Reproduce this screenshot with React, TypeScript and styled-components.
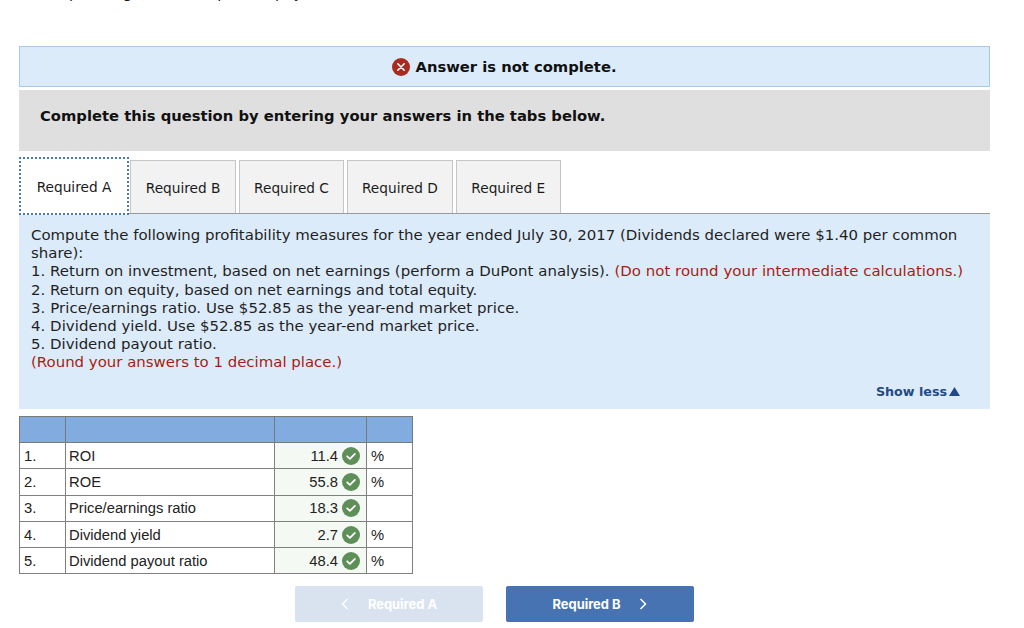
import React from "react";
import styled, { createGlobalStyle } from "styled-components";

const GlobalStyle = createGlobalStyle`
  html, body {
    margin: 0;
    padding: 0;
    height: 628px;
    overflow: hidden;
    background: #fff;
    font-family: "DejaVu Sans", Verdana, sans-serif;
    color: #1a1a1a;
  }
`;

const Page = styled.div`
  display: flex;
  flex-direction: column;
  width: 971px;
  margin-left: 19px;
`;

const ClippedLine = styled.div`
  height: 46px;
  margin-left: 1px;
  overflow: hidden;
  font-size: 15px;
  line-height: 18px;
  white-space: nowrap;
  & > span {
    display: block;
    margin-top: -16px;
  }
`;

const Banner = styled.div`
  box-sizing: border-box;
  height: 41px;
  display: flex;
  align-items: center;
  justify-content: center;
  gap: 5px;
  background: #dcebf9;
  border: 1px solid #a9c8e6;
  font-size: 14.75px;
  font-weight: 700;
  color: #111;
`;

const Instruction = styled.div`
  box-sizing: border-box;
  height: 61px;
  margin-top: 3px;
  padding: 16px 21px 0;
  background: #dfdfdf;
  font-size: 14.75px;
  line-height: 19px;
  font-weight: 700;
  color: #111;
`;

const TabBar = styled.div`
  display: flex;
  align-items: flex-end;
  gap: 3px;
  height: 53px;
  margin-top: 9px;
  border-bottom: 1px solid #9a9a9a;
`;

const Tab = styled.div<{ $active?: boolean }>`
  box-sizing: border-box;
  position: relative;
  width: ${(p) => (p.$active ? "110px" : "105.4px")};
  height: ${(p) => (p.$active ? "58px" : "53px")};
  margin-right: ${(p) => (p.$active ? "-1.6px" : "0")};
  margin-bottom: ${(p) => (p.$active ? "-2px" : "0")};
  display: flex;
  align-items: center;
  justify-content: center;
  padding-top: 2px;
  padding-bottom: ${(p) => (p.$active ? "1px" : "0")};
  font-size: 13.7px;
  color: #1a1a1a;
  background: ${(p) => (p.$active ? "#fff" : "#f2f2f2")};
  border: ${(p) => (p.$active ? "2px dotted #4a78b8" : "1px solid #c6c6c6")};
  border-bottom: ${(p) => (p.$active ? "2px dotted #4a78b8" : "none")};
  z-index: ${(p) => (p.$active ? 1 : 0)};
`;

const QuestionPanel = styled.div`
  box-sizing: border-box;
  height: 195px;
  padding: 12px 12px 0;
  background: #dcebf9;
  font-size: 14.95px;
  line-height: 18.2px;
  color: #1f1f1f;
  display: flex;
  flex-direction: column;
`;

const Line = styled.div<{ $track?: number }>`
  letter-spacing: ${(p) => p.$track ?? 0}px;
`;

const Red = styled.span`
  color: #a81c12;
`;

const ShowLess = styled.div`
  display: flex;
  align-items: center;
  justify-content: flex-end;
  gap: 2px;
  margin-top: 11px;
  padding-right: 18px;
  font-size: 12.7px;
  font-weight: 700;
  color: #1f4a87;
`;

const Table = styled.table`
  width: 393px;
  margin-top: 7px;
  border-collapse: collapse;
  table-layout: fixed;
  font-family: "Liberation Sans", Arial, sans-serif;
  font-size: 14.75px;
  color: #222;
`;

const HeadCell = styled.th`
  height: 25px;
  padding: 0;
  background: #82abe0;
  border: 1px solid #77797c;
`;

const Cell = styled.td`
  height: 25.3px;
  padding: 0 0 0 3px;
  border: 1px solid #808080;
`;

const IndexCell = styled(Cell)`
  padding-left: 4px;
`;

const UnitCell = styled(Cell)`
  padding-left: 4px;
`;

const AnswerCell = styled(Cell)`
  padding: 0;
  background: #f5f9f3;
`;

const AnswerInner = styled.div`
  display: flex;
  align-items: center;
  justify-content: flex-end;
  gap: 4px;
  padding-right: 6px;
`;

const Footer = styled.div`
  display: flex;
  gap: 23px;
  margin-top: 12px;
  margin-left: 276px;
`;

const NavButton = styled.div<{ $disabled?: boolean }>`
  box-sizing: border-box;
  width: 188px;
  height: 36px;
  display: flex;
  align-items: center;
  justify-content: center;
  gap: 19px;
  border-radius: 2px;
  background: ${(p) => (p.$disabled ? "#d9e3f0" : "#4773b3")};
  color: #fff;
  font-family: Inter, "Liberation Sans", sans-serif;
  font-size: 12.9px;
  font-weight: 700;
`;

const ErrorIcon = () => (
  <svg width="18" height="18" viewBox="0 0 18 18">
    <circle cx="9" cy="9" r="9" fill="#a82a20" />
    <path d="M5.8 5.8l6.4 6.4M12.2 5.8l-6.4 6.4" stroke="#fff" strokeWidth="1.6" strokeLinecap="round" />
  </svg>
);

const CheckIcon = () => (
  <svg width="18" height="18" viewBox="0 0 18 18">
    <circle cx="9" cy="9" r="9" fill="#5f8f58" />
    <path d="M5.2 9.3l2.7 2.6 5-5" fill="none" stroke="#fff" strokeWidth="1.8" strokeLinecap="round" strokeLinejoin="round" />
  </svg>
);

const Chevron = ({ left }: { left?: boolean }) => (
  <svg width="8" height="12" viewBox="0 0 8 12">
    <path d={left ? "M6.5 1L1.5 6l5 5" : "M1.5 1l5 5-5 5"} fill="none" stroke="#fff" strokeWidth="1.5" />
  </svg>
);

const rows = [
  { name: "ROI", value: "11.4", unit: "%" },
  { name: "ROE", value: "55.8", unit: "%" },
  { name: "Price/earnings ratio", value: "18.3", unit: "" },
  { name: "Dividend yield", value: "2.7", unit: "%" },
  { name: "Dividend payout ratio", value: "48.4", unit: "%" },
];

const tabs = ["Required A", "Required B", "Required C", "Required D", "Required E"];

export default function App() {
  return (
    <Page>
      <GlobalStyle />
      <ClippedLine>
        <span>Total operating and net expenses pay</span>
      </ClippedLine>
      <Banner>
        <ErrorIcon />
        Answer is not complete.
      </Banner>
      <Instruction>Complete this question by entering your answers in the tabs below.</Instruction>
      <TabBar>
        {tabs.map((t, i) => (
          <Tab key={t} $active={i === 0}>
            {t}
          </Tab>
        ))}
      </TabBar>
      <QuestionPanel>
        <Line>
          Compute the following profitability measures for the year ended July 30, 2017 (Dividends declared were $1.40 per common share):
        </Line>
        <Line $track={0.033}>
          1. Return on investment, based on net earnings (perform a DuPont analysis).{" "}
          <Red>(Do not round your intermediate calculations.)</Red>
        </Line>
        <Line>2. Return on equity, based on net earnings and total equity.</Line>
        <Line $track={0.06}>3. Price/earnings ratio. Use $52.85 as the year-end market price.</Line>
        <Line $track={0.04}>4. Dividend yield. Use $52.85 as the year-end market price.</Line>
        <Line>5. Dividend payout ratio.</Line>
        <Red>(Round your answers to 1 decimal place.)</Red>
        <ShowLess>
          Show less
          <svg width="11" height="9" viewBox="0 0 11 9">
            <path d="M5.5 0L11 9H0z" fill="#1f4a87" />
          </svg>
        </ShowLess>
      </QuestionPanel>
      <Table>
        <colgroup>
          <col style={{ width: 46 }} />
          <col style={{ width: 209 }} />
          <col style={{ width: 92 }} />
          <col style={{ width: 46 }} />
        </colgroup>
        <thead>
          <tr>
            <HeadCell />
            <HeadCell />
            <HeadCell />
            <HeadCell />
          </tr>
        </thead>
        <tbody>
          {rows.map((r, i) => (
            <tr key={r.name}>
              <IndexCell>{i + 1}.</IndexCell>
              <Cell>{r.name}</Cell>
              <AnswerCell>
                <AnswerInner>
                  {r.value}
                  <CheckIcon />
                </AnswerInner>
              </AnswerCell>
              <UnitCell>{r.unit}</UnitCell>
            </tr>
          ))}
        </tbody>
      </Table>
      <Footer>
        <NavButton $disabled>
          <Chevron left />
          Required A
        </NavButton>
        <NavButton>
          Required B
          <Chevron />
        </NavButton>
      </Footer>
    </Page>
  );
}
